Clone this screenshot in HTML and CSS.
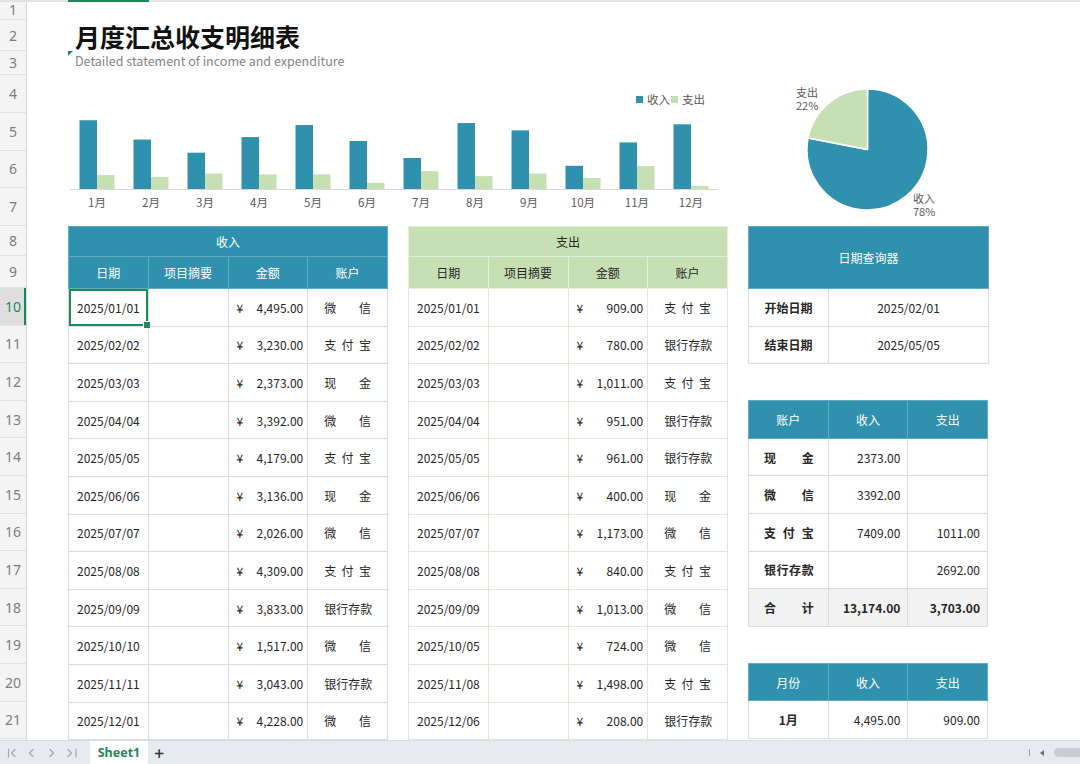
FILE: index.html
```html
<!DOCTYPE html>
<html lang="zh-CN">
<head>
<meta charset="utf-8">
<title>月度汇总收支明细表</title>
<link rel="stylesheet" href="styles.css">
</head>
<body>
<div class="app">
  <div class="topstrip"><span class="colsel"></span></div>
  <div class="sheet">
    <div class="rowhead">
      <div class="rh rh-1">1</div>
      <div class="rh rh-2">2</div>
      <div class="rh rh-3">3</div>
      <div class="rh rh-c">4</div>
      <div class="rh rh-c">5</div>
      <div class="rh rh-c">6</div>
      <div class="rh rh-c">7</div>
      <div class="rh rh-8">8</div>
      <div class="rh rh-9">9</div>
      <div class="rh rh-d active">10</div>
      <div class="rh rh-d">11</div>
      <div class="rh rh-d">12</div>
      <div class="rh rh-d">13</div>
      <div class="rh rh-d">14</div>
      <div class="rh rh-d">15</div>
      <div class="rh rh-d">16</div>
      <div class="rh rh-d">17</div>
      <div class="rh rh-d">18</div>
      <div class="rh rh-d">19</div>
      <div class="rh rh-d">20</div>
      <div class="rh rh-d">21</div>
    </div>
    <div class="main">
      <div class="title-block">
        <span class="corner-mark"></span>
        <h1 class="title">月度汇总收支明细表</h1>
        <div class="subtitle">Detailed statement of income and expenditure</div>
      </div>
      <div class="charts">
        <svg class="bar-chart" width="660" height="151" viewBox="0 0 660 151">
          <g class="legend">
            <rect x="568" y="21" width="7" height="7" fill="#2f91ad"/>
            <text x="579" y="28.5">收入</text>
            <rect x="603" y="21" width="7" height="7" fill="#c6e0b4"/>
            <text x="614" y="28.5">支出</text>
          </g>
          <g fill="#2f91ad">
            <rect x="11.5" y="45.23" width="17.5" height="68.77"/>
            <rect x="65.5" y="64.58" width="17.5" height="49.42"/>
            <rect x="119.5" y="77.69" width="17.5" height="36.31"/>
            <rect x="173.5" y="62.10" width="17.5" height="51.90"/>
            <rect x="227.5" y="50.06" width="17.5" height="63.94"/>
            <rect x="281.5" y="66.02" width="17.5" height="47.98"/>
            <rect x="335.5" y="83.00" width="17.5" height="31.00"/>
            <rect x="389.5" y="48.07" width="17.5" height="65.93"/>
            <rect x="443.5" y="55.36" width="17.5" height="58.64"/>
            <rect x="497.5" y="90.79" width="17.5" height="23.21"/>
            <rect x="551.5" y="67.44" width="17.5" height="46.56"/>
            <rect x="605.5" y="49.31" width="17.5" height="64.69"/>
          </g>
          <g fill="#c6e0b4">
            <rect x="29" y="100.09" width="17.5" height="13.91"/>
            <rect x="83" y="102.07" width="17.5" height="11.93"/>
            <rect x="137" y="98.53" width="17.5" height="15.47"/>
            <rect x="191" y="99.45" width="17.5" height="14.55"/>
            <rect x="245" y="99.30" width="17.5" height="14.70"/>
            <rect x="299" y="107.88" width="17.5" height="6.12"/>
            <rect x="353" y="96.05" width="17.5" height="17.95"/>
            <rect x="407" y="101.15" width="17.5" height="12.85"/>
            <rect x="461" y="98.50" width="17.5" height="15.50"/>
            <rect x="515" y="102.92" width="17.5" height="11.08"/>
            <rect x="569" y="91.08" width="17.5" height="22.92"/>
            <rect x="623" y="110.82" width="17.5" height="3.18"/>
          </g>
          <line x1="2" y1="114.5" x2="650" y2="114.5" stroke="#d9d9d9" stroke-width="1"/>
          <g class="axis-labels" text-anchor="middle">
            <text x="29" y="132">1月</text>
            <text x="83" y="132">2月</text>
            <text x="137" y="132">3月</text>
            <text x="191" y="132">4月</text>
            <text x="245" y="132">5月</text>
            <text x="299" y="132">6月</text>
            <text x="353" y="132">7月</text>
            <text x="407" y="132">8月</text>
            <text x="461" y="132">9月</text>
            <text x="515" y="132">10月</text>
            <text x="569" y="132">11月</text>
            <text x="623" y="132">12月</text>
          </g>
        </svg>
        <svg class="pie-chart" width="260" height="151" viewBox="0 0 260 151">
          <path d="M127.5 74.5 L127.5 14 A60.5 60.5 0 1 1 68.11 62.96 Z" fill="#2f91ad" stroke="#fff" stroke-width="1.5" stroke-linejoin="round"/>
          <path d="M127.5 74.5 L127.5 14 A60.5 60.5 0 0 0 68.11 62.96 Z" fill="#c6e0b4" stroke="#fff" stroke-width="1.5" stroke-linejoin="round"/>
          <g class="pie-labels">
            <text x="56" y="22">支出</text>
            <text x="56" y="34.5">22%</text>
            <text x="173" y="128">收入</text>
            <text x="173" y="140.5">78%</text>
          </g>
        </svg>
      </div>
      <div class="tables">
        <table class="tbl w4 blue">
          <thead>
            <tr class="hr1"><th colspan="4">收入</th></tr>
            <tr class="hr2"><th>日期</th><th>项目摘要</th><th>金额</th><th>账户</th></tr>
          </thead>
          <tbody>
            <tr><td class="selected">2025/01/01</td><td></td><td><div class="amt"><span>¥</span><span>4,495.00</span></div></td><td><div class="dist"><span>微</span><span>信</span></div></td></tr>
            <tr><td>2025/02/02</td><td></td><td><div class="amt"><span>¥</span><span>3,230.00</span></div></td><td><div class="dist"><span>支</span><span>付</span><span>宝</span></div></td></tr>
            <tr><td>2025/03/03</td><td></td><td><div class="amt"><span>¥</span><span>2,373.00</span></div></td><td><div class="dist"><span>现</span><span>金</span></div></td></tr>
            <tr><td>2025/04/04</td><td></td><td><div class="amt"><span>¥</span><span>3,392.00</span></div></td><td><div class="dist"><span>微</span><span>信</span></div></td></tr>
            <tr><td>2025/05/05</td><td></td><td><div class="amt"><span>¥</span><span>4,179.00</span></div></td><td><div class="dist"><span>支</span><span>付</span><span>宝</span></div></td></tr>
            <tr><td>2025/06/06</td><td></td><td><div class="amt"><span>¥</span><span>3,136.00</span></div></td><td><div class="dist"><span>现</span><span>金</span></div></td></tr>
            <tr><td>2025/07/07</td><td></td><td><div class="amt"><span>¥</span><span>2,026.00</span></div></td><td><div class="dist"><span>微</span><span>信</span></div></td></tr>
            <tr><td>2025/08/08</td><td></td><td><div class="amt"><span>¥</span><span>4,309.00</span></div></td><td><div class="dist"><span>支</span><span>付</span><span>宝</span></div></td></tr>
            <tr><td>2025/09/09</td><td></td><td><div class="amt"><span>¥</span><span>3,833.00</span></div></td><td><div class="dist"><span>银</span><span>行</span><span>存</span><span>款</span></div></td></tr>
            <tr><td>2025/10/10</td><td></td><td><div class="amt"><span>¥</span><span>1,517.00</span></div></td><td><div class="dist"><span>微</span><span>信</span></div></td></tr>
            <tr><td>2025/11/11</td><td></td><td><div class="amt"><span>¥</span><span>3,043.00</span></div></td><td><div class="dist"><span>银</span><span>行</span><span>存</span><span>款</span></div></td></tr>
            <tr><td>2025/12/01</td><td></td><td><div class="amt"><span>¥</span><span>4,228.00</span></div></td><td><div class="dist"><span>微</span><span>信</span></div></td></tr>
          </tbody>
        </table>
        <table class="tbl w4 green">
          <thead>
            <tr class="hr1"><th colspan="4">支出</th></tr>
            <tr class="hr2"><th>日期</th><th>项目摘要</th><th>金额</th><th>账户</th></tr>
          </thead>
          <tbody>
            <tr><td>2025/01/01</td><td></td><td><div class="amt"><span>¥</span><span>909.00</span></div></td><td><div class="dist"><span>支</span><span>付</span><span>宝</span></div></td></tr>
            <tr><td>2025/02/02</td><td></td><td><div class="amt"><span>¥</span><span>780.00</span></div></td><td><div class="dist"><span>银</span><span>行</span><span>存</span><span>款</span></div></td></tr>
            <tr><td>2025/03/03</td><td></td><td><div class="amt"><span>¥</span><span>1,011.00</span></div></td><td><div class="dist"><span>支</span><span>付</span><span>宝</span></div></td></tr>
            <tr><td>2025/04/04</td><td></td><td><div class="amt"><span>¥</span><span>951.00</span></div></td><td><div class="dist"><span>银</span><span>行</span><span>存</span><span>款</span></div></td></tr>
            <tr><td>2025/05/05</td><td></td><td><div class="amt"><span>¥</span><span>961.00</span></div></td><td><div class="dist"><span>银</span><span>行</span><span>存</span><span>款</span></div></td></tr>
            <tr><td>2025/06/06</td><td></td><td><div class="amt"><span>¥</span><span>400.00</span></div></td><td><div class="dist"><span>现</span><span>金</span></div></td></tr>
            <tr><td>2025/07/07</td><td></td><td><div class="amt"><span>¥</span><span>1,173.00</span></div></td><td><div class="dist"><span>微</span><span>信</span></div></td></tr>
            <tr><td>2025/08/08</td><td></td><td><div class="amt"><span>¥</span><span>840.00</span></div></td><td><div class="dist"><span>支</span><span>付</span><span>宝</span></div></td></tr>
            <tr><td>2025/09/09</td><td></td><td><div class="amt"><span>¥</span><span>1,013.00</span></div></td><td><div class="dist"><span>微</span><span>信</span></div></td></tr>
            <tr><td>2025/10/05</td><td></td><td><div class="amt"><span>¥</span><span>724.00</span></div></td><td><div class="dist"><span>微</span><span>信</span></div></td></tr>
            <tr><td>2025/11/08</td><td></td><td><div class="amt"><span>¥</span><span>1,498.00</span></div></td><td><div class="dist"><span>支</span><span>付</span><span>宝</span></div></td></tr>
            <tr><td>2025/12/06</td><td></td><td><div class="amt"><span>¥</span><span>208.00</span></div></td><td><div class="dist"><span>银</span><span>行</span><span>存</span><span>款</span></div></td></tr>
          </tbody>
        </table>
        <div class="side">
          <table class="tbl w3 blue">
            <colgroup><col class="c80"><col class="c160"></colgroup>
            <thead>
              <tr class="hq"><th colspan="2">日期查询器</th></tr>
            </thead>
            <tbody>
              <tr><td class="lbl">开始日期</td><td>2025/02/01</td></tr>
              <tr><td class="lbl">结束日期</td><td>2025/05/05</td></tr>
            </tbody>
          </table>
          <table class="tbl w3 blue gap-top">
            <thead>
              <tr class="hrow"><th>账户</th><th>收入</th><th>支出</th></tr>
            </thead>
            <tbody>
              <tr><td class="lbl"><div class="dist bold"><span>现</span><span>金</span></div></td><td class="num">2373.00</td><td class="num"></td></tr>
              <tr><td class="lbl"><div class="dist bold"><span>微</span><span>信</span></div></td><td class="num">3392.00</td><td class="num"></td></tr>
              <tr><td class="lbl"><div class="dist bold"><span>支</span><span>付</span><span>宝</span></div></td><td class="num">7409.00</td><td class="num">1011.00</td></tr>
              <tr><td class="lbl"><div class="dist bold"><span>银</span><span>行</span><span>存</span><span>款</span></div></td><td class="num"></td><td class="num">2692.00</td></tr>
              <tr class="total"><td class="lbl"><div class="dist bold"><span>合</span><span>计</span></div></td><td class="num">13,174.00</td><td class="num">3,703.00</td></tr>
            </tbody>
          </table>
          <table class="tbl w3 blue gap-top">
            <thead>
              <tr class="hrow"><th>月份</th><th>收入</th><th>支出</th></tr>
            </thead>
            <tbody>
              <tr><td class="lbl">1月</td><td class="num">4,495.00</td><td class="num">909.00</td></tr>
            </tbody>
          </table>
        </div>
      </div>
    </div>
  </div>
  <div class="tabbar">
    <svg class="nav" width="84" height="24" viewBox="0 0 84 24">
      <g fill="none" stroke="#a3a8ad" stroke-width="1.2" stroke-linecap="round" stroke-linejoin="round">
        <line x1="8.5" y1="9" x2="8.5" y2="17"/>
        <polyline points="15,9.5 11.5,13 15,16.5"/>
        <polyline points="33,9.5 29.5,13 33,16.5"/>
        <polyline points="50,9.5 53.5,13 50,16.5"/>
        <polyline points="68,9.5 71.5,13 68,16.5"/>
        <line x1="76" y1="9" x2="76" y2="17"/>
      </g>
    </svg>
    <div class="sheet-tab">Sheet1</div>
    <div class="add-tab">+</div>
    <div class="hscroll">
      <span class="hs-sep"></span>
      <span class="hs-arrow"></span>
      <span class="hs-thumb"></span>
    </div>
  </div>
</div>
</body>
</html>
```
FILE: styles.css
```css
* { box-sizing: border-box; }

body {
  margin: 0;
  width: 1080px;
  height: 764px;
  overflow: hidden;
  background: #fff;
  color: #262626;
  font-family: "Noto Sans CJK SC", "Noto Sans", sans-serif;
}

.app {
  position: relative;
  width: 1080px;
  height: 764px;
  display: flex;
  flex-direction: column;
}

.topstrip {
  position: absolute;
  left: 0;
  top: 0;
  width: 1080px;
  height: 2px;
  background: #e2e2e2;
  z-index: 3;
}
.colsel {
  position: absolute;
  left: 68px;
  top: 0;
  width: 81px;
  height: 2px;
  background: #1e8a57;
}

.sheet {
  height: 740px;
  display: flex;
  overflow: hidden;
  flex: none;
}

.rowhead {
  width: 27px;
  flex: none;
  background: #f4f4f4;
  border-right: 1px solid #d8d8d8;
}
.rh {
  display: flex;
  align-items: center;
  justify-content: center;
  border-bottom: 1px solid #e2e2e2;
  font-family: "Noto Sans", sans-serif;
  font-size: 14px;
  color: #7d7d7d;
}
.rh-1 { height: 20px; }
.rh-2 { height: 31px; }
.rh-3 { height: 24px; }
.rh-c { height: 37.75px; }
.rh-8 { height: 30px; }
.rh-9 { height: 32px; }
.rh-d { height: 37.6px; }
.rh.active {
  background: #dfdfdf;
  color: #1e8a57;
  box-shadow: inset -2px 0 #1e8a57;
}

.main {
  flex: 1;
  padding-left: 41px;
  display: flex;
  flex-direction: column;
  min-width: 0;
}

.title-block {
  height: 75px;
  flex: none;
  padding: 21px 0 0 7px;
  position: relative;
}
.title {
  margin: 0;
  font-size: 25px;
  font-weight: 700;
  line-height: 30px;
  color: #111;
}
.subtitle {
  margin-top: 2px;
  font-size: 12.5px;
  line-height: 16px;
  color: #858585;
}
.corner-mark {
  position: absolute;
  left: 0;
  top: 51px;
  width: 0;
  height: 0;
  border-top: 5px solid #1e8a57;
  border-right: 5px solid transparent;
}

.charts {
  height: 151px;
  flex: none;
  display: flex;
  gap: 12px;
}
.bar-chart text,
.pie-chart text {
  font-family: "Noto Sans CJK SC", "Noto Sans", sans-serif;
  font-size: 11.5px;
  fill: #595959;
}
.pie-chart text { font-size: 11px; }

.tables {
  display: flex;
  gap: 20px;
  align-items: flex-start;
}

.tbl {
  border-collapse: collapse;
  table-layout: fixed;
  font-size: 12px;
  flex: none;
}
.w4 { width: 320px; }
.w3 { width: 240px; }
.c80 { width: 80px; }
.c160 { width: 160px; }
.tbl th,
.tbl td {
  border: 1px solid #dcdcdc;
  padding: 0;
  text-align: center;
  font-weight: 400;
  white-space: nowrap;
  color: #262626;
}
.blue th {
  background: #2f91ad;
  color: #fff;
  border-color: #5eabc2;
}
.green th {
  background: #c6e0b4;
  color: #262626;
  border-color: #e4f0db;
}
.green td { border-color: #e3e8dd; }

.hr1 { height: 30px; }
.hr2 { height: 32px; }
.hq { height: 62px; }
.hrow { height: 37.6px; }
.tbl tbody tr { height: 37.6px; }

.amt {
  display: flex;
  justify-content: space-between;
  padding: 0 4px 0 8px;
}
.dist {
  display: flex;
  justify-content: space-between;
  padding: 0 16px;
}
.dist.bold {
  font-weight: 700;
  padding: 0 14px 0 15px;
}
.tbl td.lbl { font-weight: 700; }
.tbl td.num { text-align: right; padding-right: 7px; }
.total td { background: #f2f2f2; }
.tbl .total td.num { font-weight: 700; }

.side {
  display: flex;
  flex-direction: column;
  width: 240px;
  flex: none;
}
.gap-top { margin-top: 36px; }

td.selected {
  position: relative;
  outline: 2px solid #1e8a57;
  outline-offset: -2px;
}
td.selected::after {
  content: "";
  position: absolute;
  right: -3px;
  bottom: -3px;
  width: 6px;
  height: 6px;
  background: #1e8a57;
  border: 1px solid #fff;
}

.tabbar {
  height: 24px;
  flex: none;
  background: #e7ebef;
  border-top: 1px solid #d9dee3;
  display: flex;
  align-items: stretch;
  position: relative;
}
.nav { flex: none; margin-top: -1px; }
.sheet-tab {
  margin-left: 6px;
  width: 58px;
  background: #fff;
  color: #1e8a57;
  font-family: "Noto Sans", sans-serif;
  font-weight: 700;
  font-size: 12.5px;
  display: flex;
  align-items: center;
  justify-content: center;
  border-radius: 0 0 3px 3px;
}
.add-tab {
  margin-left: 6px;
  font-family: "Noto Sans", sans-serif;
  font-size: 18px;
  font-weight: 500;
  color: #333;
  display: flex;
  align-items: center;
  line-height: 1;
}
.hscroll {
  margin-left: auto;
  display: flex;
  align-items: center;
  gap: 10px;
}
.hs-sep {
  width: 1px;
  height: 7px;
  background: #9aa0a6;
}
.hs-arrow {
  width: 0;
  height: 0;
  border-top: 3px solid transparent;
  border-bottom: 3px solid transparent;
  border-right: 4px solid #6b7076;
}
.hs-thumb {
  width: 26px;
  height: 9px;
  background: #c9cdd2;
  border-radius: 5px 0 0 5px;
}
```
